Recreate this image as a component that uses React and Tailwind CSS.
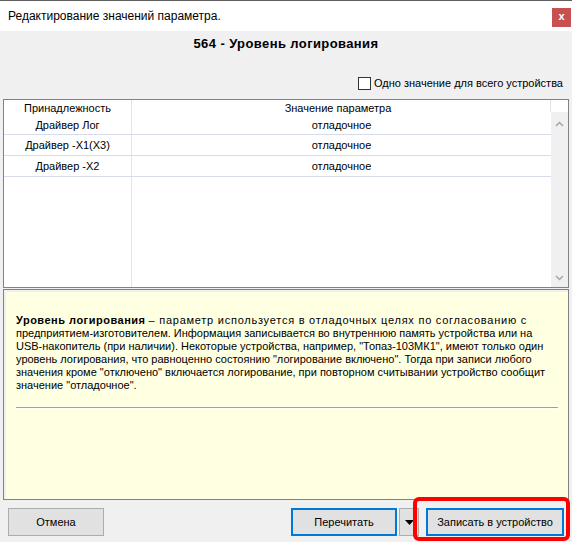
import React from 'react';

const rows = [
  { owner: 'Драйвер Лог', value: 'отладочное', h: 'h-[19px]' },
  { owner: 'Драйвер -X1(X3)', value: 'отладочное', h: 'h-[21px]' },
  { owner: 'Драйвер -X2', value: 'отладочное', h: 'h-[21px]' },
];

function Chevron({ down }) {
  return (
    <svg width="9" height="6" viewBox="0 0 9 6" className="block">
      <path
        d={down ? 'M1 1 L4.5 4.5 L8 1' : 'M1 5 L4.5 1.5 L8 5'}
        fill="none"
        stroke="#a6a6a6"
        strokeWidth="1.5"
      />
    </svg>
  );
}

export default function App() {
  return (
    <div className="relative w-[572px] h-[542px] bg-[#f0f0f0] flex flex-col text-black font-['Liberation_Sans',Arial,sans-serif] text-[11px] overflow-hidden">
      {/* title bar */}
      <div className="h-[31px] shrink-0 bg-white border-t border-[#5f5f5f] flex justify-between pl-2 pr-[1px]">
        <span className="text-[12px] leading-[30px]">Редактирование значений параметра.</span>
        <div className="mt-[7px] w-[19px] h-[19px] bg-[#c75050] flex items-center justify-center text-white font-bold text-[11px] leading-none pb-[2px]">
          x
        </div>
      </div>

      <h1 className="mt-[5px] h-[16px] leading-[16px] text-center text-[13px] font-bold tracking-[0.4px]">
        564 - Уровень логирования
      </h1>

      <div className="mt-[23px] h-[16px] flex items-center justify-end pr-[9px] gap-[3px]">
        <span className="w-[13px] h-[13px] border border-[#333] bg-white" />
        <span>Одно значение для всего устройства</span>
      </div>

      {/* parameter grid */}
      <div className="mt-[8px] mx-[3px] h-[189px] shrink-0 border border-[#828282] bg-white flex">
        <div className="flex-1 flex flex-col">
          <div className="h-[16px] flex leading-[16px]">
            <div className="w-[128px] border-r border-[#dfe3ea] text-center">Принадлежность</div>
            <div className="flex-1 text-center border-r border-[#dfe3ea] h-[12px] overflow-visible whitespace-nowrap pr-[6px]">
              Значение параметра
            </div>
          </div>
          {rows.map((r) => (
            <div key={r.owner} className={`${r.h} flex border-b border-[#d6dcec]`}>
              <div className="w-[128px] border-r border-[#dfe3ea] flex items-center justify-center">{r.owner}</div>
              <div className="flex-1 flex items-center justify-center">{r.value}</div>
            </div>
          ))}
          <div className="flex-1 flex">
            <div className="w-[128px] border-r border-[#dfe3ea]" />
          </div>
        </div>
        <div className="w-[17px] flex flex-col">
          <div className="h-[12px] bg-white" />
          <div className="flex-1 bg-[#f0f0f0] flex flex-col items-center justify-between pt-[9px] pb-[6px]">
            <Chevron />
            <Chevron down />
          </div>
        </div>
      </div>

      {/* description */}
      <div className="mt-[1px] mx-[3px] h-[211px] shrink-0 border border-[#828282] bg-[#f0f0f0] pt-[2px] pl-[2px]">
        <div className="h-full bg-[#ffffe1] pt-[22px] pl-[10px] pr-[10px] leading-[13px] whitespace-nowrap">
          <p>
            <b className="tracking-[0.5px]">Уровень логирования</b>{' '}
            <span className="tracking-[0.75px]">– параметр используется в отладочных целях по согласованию с</span>
            <br />
            предприятием-изготовителем. Информация записывается во внутреннюю память устройства или на<br />
            USB-накопитель (при наличии). Некоторые устройства, например, "Топаз-103МК1", имеют только один<br />
            уровень логирования, что равноценно состоянию "логирование включено". Тогда при записи любого<br />
            значения кроме "отключено" включается логирование, при повторном считывании устройство сообщит<br />
            значение "отладочное".
          </p>
          <div className="mt-[15px] border-t border-[#a0a0a0] border-b border-b-white" />
        </div>
      </div>

      {/* buttons */}
      <div className="mt-[8px] flex items-center px-[8px]">
        <button className="w-[96px] h-[28px] border border-[#adadad] bg-[#e1e1e1]">Отмена</button>
        <button className="ml-auto w-[106px] h-[28px] border-2 border-[#0078d7] bg-[#e1e1e1]">Перечитать</button>
        <button className="ml-[2px] w-[20px] h-[28px] border border-[#adadad] bg-[#e1e1e1] flex items-center justify-center">
          <svg width="9" height="5" viewBox="0 0 9 5">
            <path d="M0 0 H9 L4.5 5 Z" fill="#000" />
          </svg>
        </button>
        <button className="ml-[7px] w-[138px] h-[28px] border-2 border-[#0078d7] bg-[#e1e1e1]">Записать в устройство</button>
      </div>

      {/* highlight annotation */}
      <div className="absolute left-[413px] top-[497px] w-[157px] h-[44px] border-4 border-[#ff0000] rounded-[6px] pointer-events-none" />
    </div>
  );
}
